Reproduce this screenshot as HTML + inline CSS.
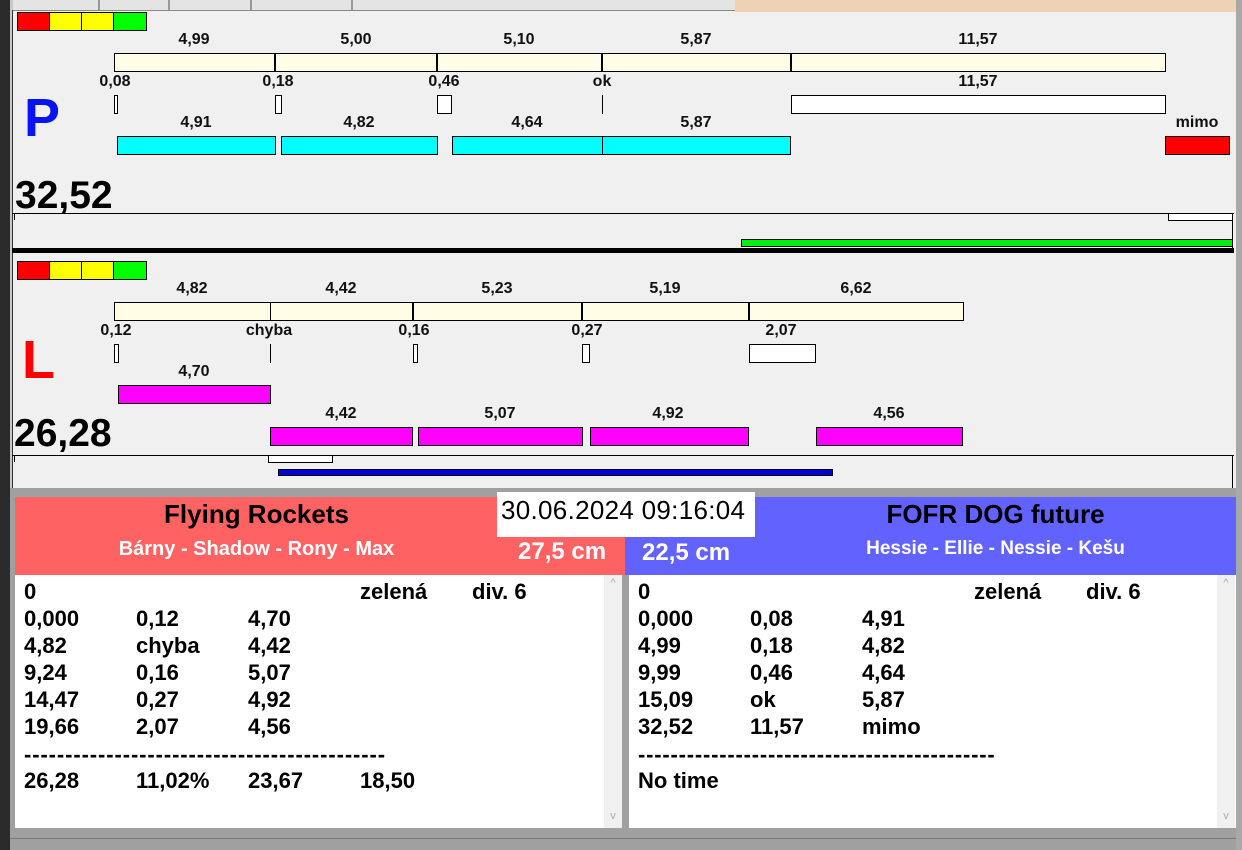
<!DOCTYPE html>
<html><head><meta charset="utf-8"><style>
*{margin:0;padding:0}
body{width:1242px;height:850px;position:relative;overflow:hidden;background:#f0f0f0;font-family:"Liberation Sans",Arial,sans-serif}
div{position:absolute;box-sizing:border-box}
.b{border:1px solid #000}
.c{background:#fffde6}
.w{background:#fff}
.cy{background:#00ffff}
.m{background:#ff00ff}
.t{font-weight:bold;font-size:16px;line-height:18px;transform:translateX(-50%);white-space:nowrap;color:#111}
.l{font-weight:bold;font-size:22px;line-height:27px;color:#000;white-space:nowrap}
.h{color:#fff;font-weight:bold;white-space:nowrap}
</style></head><body>
<div style="left:0;top:0;width:10px;height:850px;background:#2a2a2a"></div>
<div style="left:10px;top:0;width:3px;height:850px;background:#c8c8c8"></div>
<div style="left:13px;top:0;width:722px;height:11px;background:#e4e4e4;border-bottom:1px solid #888"></div>
<div style="left:98px;top:0;width:2px;height:10px;background:#999"></div>
<div style="left:168px;top:0;width:2px;height:10px;background:#999"></div>
<div style="left:250px;top:0;width:2px;height:10px;background:#999"></div>
<div style="left:351px;top:0;width:2px;height:10px;background:#999"></div>
<div style="left:735px;top:0;width:501px;height:12px;background:#efd2b6"></div>
<div style="left:1236px;top:0;width:6px;height:850px;background:#a8a8a8"></div>
<div style="left:12px;top:10px;width:1px;height:480px;background:#333"></div>

<div class="b" style="left:17px;top:12px;width:33px;height:19px;background:#f00"></div>
<div class="b" style="left:49px;top:12px;width:33px;height:19px;background:#ff0"></div>
<div class="b" style="left:81px;top:12px;width:33px;height:19px;background:#ff0"></div>
<div class="b" style="left:113px;top:12px;width:34px;height:19px;background:#0f0"></div>

<div class="t" style="left:194px;top:31px">4,99</div>
<div class="t" style="left:356px;top:31px">5,00</div>
<div class="t" style="left:519px;top:31px">5,10</div>
<div class="t" style="left:696px;top:31px">5,87</div>
<div class="t" style="left:978px;top:31px">11,57</div>
<div class="b c" style="left:114px;top:53px;width:1052px;height:19px"></div>
<div style="left:274px;top:53px;width:2px;height:19px;background:#000"></div>
<div style="left:436px;top:53px;width:2px;height:19px;background:#000"></div>
<div style="left:601px;top:53px;width:2px;height:19px;background:#000"></div>
<div style="left:790px;top:53px;width:2px;height:19px;background:#000"></div>

<div class="t" style="left:115px;top:73px">0,08</div>
<div class="t" style="left:278px;top:73px">0,18</div>
<div class="t" style="left:444px;top:73px">0,46</div>
<div class="t" style="left:602px;top:73px">ok</div>
<div class="t" style="left:978px;top:73px">11,57</div>
<div class="b w" style="left:114px;top:95px;width:4px;height:19px"></div>
<div class="b w" style="left:275px;top:95px;width:7px;height:19px"></div>
<div class="b w" style="left:437px;top:95px;width:15px;height:19px"></div>
<div style="left:602px;top:95px;width:1px;height:19px;background:#000"></div>
<div class="b w" style="left:791px;top:95px;width:375px;height:19px"></div>

<div style="left:24px;top:88px;font-size:54px;font-weight:bold;color:#0a14f0;line-height:60px">P</div>

<div class="t" style="left:196px;top:114px">4,91</div>
<div class="t" style="left:359px;top:114px">4,82</div>
<div class="t" style="left:527px;top:114px">4,64</div>
<div class="t" style="left:696px;top:114px">5,87</div>
<div class="t" style="left:1197px;top:114px">mimo</div>
<div class="b cy" style="left:117px;top:136px;width:159px;height:19px"></div>
<div class="b cy" style="left:281px;top:136px;width:157px;height:19px"></div>
<div class="b cy" style="left:452px;top:136px;width:151px;height:19px"></div>
<div class="b cy" style="left:602px;top:136px;width:189px;height:19px"></div>
<div class="b" style="left:1165px;top:136px;width:65px;height:19px;background:#f00"></div>

<div style="left:15px;top:173px;font-size:39px;font-weight:bold;line-height:46px;color:#000">32,52</div>
<div style="left:12px;top:213px;width:1222px;height:1px;background:#000"></div>
<div style="left:14px;top:214px;width:1px;height:6px;background:#000"></div>
<div class="b w" style="left:1168px;top:213px;width:65px;height:8px"></div>
<div style="left:1232px;top:213px;width:1px;height:36px;background:#000"></div>
<div class="b" style="left:741px;top:239px;width:492px;height:8px;background:#00f00f"></div>
<div style="left:12px;top:248px;width:1222px;height:5px;background:#000"></div>

<div class="b" style="left:17px;top:261px;width:33px;height:19px;background:#f00"></div>
<div class="b" style="left:49px;top:261px;width:33px;height:19px;background:#ff0"></div>
<div class="b" style="left:81px;top:261px;width:33px;height:19px;background:#ff0"></div>
<div class="b" style="left:113px;top:261px;width:34px;height:19px;background:#0f0"></div>

<div class="t" style="left:192px;top:280px">4,82</div>
<div class="t" style="left:341px;top:280px">4,42</div>
<div class="t" style="left:497px;top:280px">5,23</div>
<div class="t" style="left:665px;top:280px">5,19</div>
<div class="t" style="left:856px;top:280px">6,62</div>
<div class="b c" style="left:114px;top:302px;width:850px;height:19px"></div>
<div style="left:270px;top:302px;width:1px;height:19px;background:#000"></div>
<div style="left:412px;top:302px;width:2px;height:19px;background:#000"></div>
<div style="left:581px;top:302px;width:2px;height:19px;background:#000"></div>
<div style="left:748px;top:302px;width:2px;height:19px;background:#000"></div>

<div class="t" style="left:116px;top:322px">0,12</div>
<div class="t" style="left:269px;top:322px">chyba</div>
<div class="t" style="left:414px;top:322px">0,16</div>
<div class="t" style="left:587px;top:322px">0,27</div>
<div class="t" style="left:781px;top:322px">2,07</div>
<div class="b w" style="left:114px;top:344px;width:5px;height:19px"></div>
<div style="left:270px;top:344px;width:1px;height:19px;background:#000"></div>
<div class="b w" style="left:413px;top:344px;width:5px;height:19px"></div>
<div class="b w" style="left:582px;top:344px;width:8px;height:19px"></div>
<div class="b w" style="left:749px;top:344px;width:67px;height:19px"></div>

<div style="left:22px;top:330px;font-size:54px;font-weight:bold;color:#f00;line-height:60px">L</div>

<div class="t" style="left:194px;top:363px">4,70</div>
<div class="b m" style="left:118px;top:385px;width:153px;height:19px"></div>

<div class="t" style="left:341px;top:405px">4,42</div>
<div class="t" style="left:500px;top:405px">5,07</div>
<div class="t" style="left:668px;top:405px">4,92</div>
<div class="t" style="left:889px;top:405px">4,56</div>
<div class="b m" style="left:270px;top:427px;width:143px;height:19px"></div>
<div class="b m" style="left:418px;top:427px;width:165px;height:19px"></div>
<div class="b m" style="left:590px;top:427px;width:159px;height:19px"></div>
<div class="b m" style="left:816px;top:427px;width:147px;height:19px"></div>

<div style="left:14px;top:411px;font-size:39px;font-weight:bold;line-height:46px;color:#000">26,28</div>
<div style="left:12px;top:455px;width:1222px;height:1px;background:#000"></div>
<div style="left:14px;top:456px;width:1px;height:6px;background:#000"></div>
<div class="b w" style="left:268px;top:455px;width:65px;height:8px"></div>
<div style="left:1232px;top:455px;width:1px;height:33px;background:#000"></div>
<div class="b" style="left:278px;top:469px;width:555px;height:7px;background:#0000d8"></div>

<div style="left:10px;top:488px;width:1226px;height:362px;background:#a0a0a0"></div>
<div style="left:15px;top:497px;width:610px;height:78px;background:#ff6262"></div>
<div style="left:625px;top:497px;width:611px;height:78px;background:#6262ff"></div>
<div class="h" style="left:15px;top:498px;width:483px;text-align:center;color:#000;font-size:26px;line-height:32px">Flying Rockets</div>
<div class="h" style="left:15px;top:537px;width:483px;text-align:center;font-size:20px;line-height:24px">Bárny - Shadow - Rony - Max</div>
<div class="h" style="left:518px;top:537px;font-size:24px;line-height:30px">27,5 cm</div>
<div class="h" style="left:755px;top:498px;width:481px;text-align:center;color:#000;font-size:26px;line-height:32px">FOFR DOG future</div>
<div class="h" style="left:755px;top:537px;width:481px;text-align:center;font-size:19px;line-height:24px">Hessie - Ellie - Nessie - Kešu</div>
<div class="h" style="left:642px;top:538px;font-size:24px;line-height:30px">22,5 cm</div>
<div style="left:497px;top:492px;width:258px;height:45px;background:#fff;font-size:26px;line-height:36px;padding-left:4px;white-space:nowrap;letter-spacing:0.3px">30.06.2024 09:16:04</div>

<div style="left:15px;top:575px;width:607px;height:253px;background:#fff"></div>
<div style="left:604px;top:575px;width:18px;height:253px;background:#f0f0f0;color:#aaa;font-size:11px;text-align:center;line-height:16px">^</div>
<div style="left:604px;top:810px;width:18px;height:18px;color:#aaa;font-size:11px;text-align:center">v</div>
<div style="left:629px;top:575px;width:607px;height:253px;background:#fff"></div>
<div style="left:1217px;top:575px;width:18px;height:253px;background:#f0f0f0;color:#aaa;font-size:11px;text-align:center;line-height:16px">^</div>
<div style="left:1217px;top:810px;width:18px;height:18px;color:#aaa;font-size:11px;text-align:center">v</div>
<div style="left:10px;top:838px;width:1226px;height:1px;background:#777"></div>

<div class="l" style="left:24px;top:578px">0</div><div class="l" style="left:360px;top:578px">zelená</div><div class="l" style="left:472px;top:578px">div. 6</div>
<div class="l" style="left:24px;top:605px">0,000</div><div class="l" style="left:136px;top:605px">0,12</div><div class="l" style="left:248px;top:605px">4,70</div>
<div class="l" style="left:24px;top:632px">4,82</div><div class="l" style="left:136px;top:632px">chyba</div><div class="l" style="left:248px;top:632px">4,42</div>
<div class="l" style="left:24px;top:659px">9,24</div><div class="l" style="left:136px;top:659px">0,16</div><div class="l" style="left:248px;top:659px">5,07</div>
<div class="l" style="left:24px;top:686px">14,47</div><div class="l" style="left:136px;top:686px">0,27</div><div class="l" style="left:248px;top:686px">4,92</div>
<div class="l" style="left:24px;top:713px">19,66</div><div class="l" style="left:136px;top:713px">2,07</div><div class="l" style="left:248px;top:713px">4,56</div>
<div class="l" style="left:24px;top:741px;letter-spacing:0.9px">--------------------------------------------</div>
<div class="l" style="left:24px;top:767px">26,28</div><div class="l" style="left:136px;top:767px">11,02%</div><div class="l" style="left:248px;top:767px">23,67</div><div class="l" style="left:360px;top:767px">18,50</div>

<div class="l" style="left:638px;top:578px">0</div><div class="l" style="left:974px;top:578px">zelená</div><div class="l" style="left:1086px;top:578px">div. 6</div>
<div class="l" style="left:638px;top:605px">0,000</div><div class="l" style="left:750px;top:605px">0,08</div><div class="l" style="left:862px;top:605px">4,91</div>
<div class="l" style="left:638px;top:632px">4,99</div><div class="l" style="left:750px;top:632px">0,18</div><div class="l" style="left:862px;top:632px">4,82</div>
<div class="l" style="left:638px;top:659px">9,99</div><div class="l" style="left:750px;top:659px">0,46</div><div class="l" style="left:862px;top:659px">4,64</div>
<div class="l" style="left:638px;top:686px">15,09</div><div class="l" style="left:750px;top:686px">ok</div><div class="l" style="left:862px;top:686px">5,87</div>
<div class="l" style="left:638px;top:713px">32,52</div><div class="l" style="left:750px;top:713px">11,57</div><div class="l" style="left:862px;top:713px">mimo</div>
<div class="l" style="left:638px;top:741px;letter-spacing:0.8px">--------------------------------------------</div>
<div class="l" style="left:638px;top:767px">No time</div>
</body></html>
